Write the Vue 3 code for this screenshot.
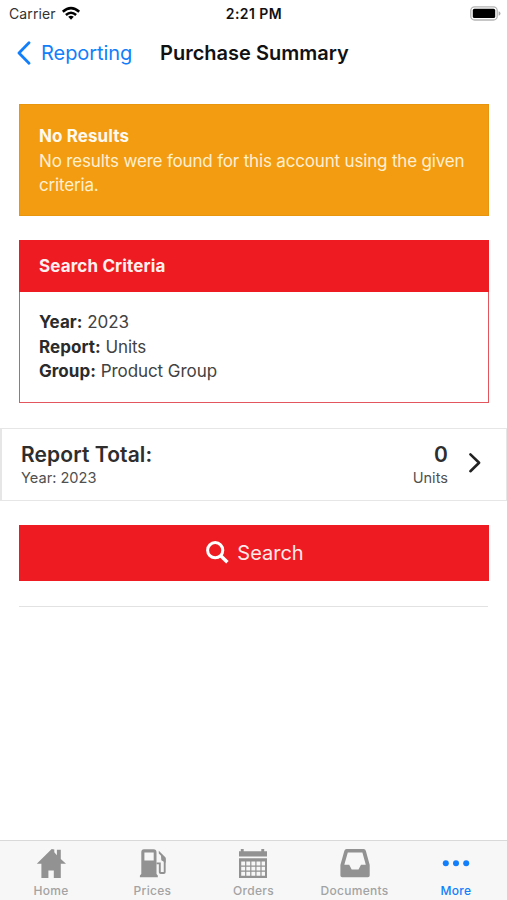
<script setup>
const criteria = [
  { label: 'Year:', value: '2023' },
  { label: 'Report:', value: 'Units' },
  { label: 'Group:', value: 'Product Group' },
]
const tabs = ['Home', 'Prices', 'Orders', 'Documents', 'More']
</script>

<template>
  <div class="screen">
    <header class="status">
      <div class="carrier">
        <span>Carrier</span>
        <svg width="20" height="15" viewBox="0 0 20 15" fill="none" stroke="#000" stroke-width="2.5">
          <path d="M1.8 5.8Q10-1.6 18.2 5.8" />
          <path d="M4.9 9Q10 4.5 15.1 9" />
          <path d="M7.2 10.8Q10 8.6 12.8 10.8L10 13.7Z" fill="#000" stroke="none" />
        </svg>
      </div>
      <div class="time">2:21 PM</div>
      <svg class="battery" width="31" height="15" viewBox="0 0 31 15">
        <rect x=".8" y=".8" width="26.4" height="13.2" rx="3.8" fill="#fff" stroke="#b4b4b4" stroke-width="1.3" />
        <rect x="2.8" y="2.8" width="22.4" height="9.2" rx="1.6" />
        <path d="M28.6 5.2Q30.5 5.8 30.5 7.5T28.6 9.8Z" fill="#aaa" />
      </svg>
    </header>

    <nav class="nav">
      <a class="back">
        <svg width="14" height="24" viewBox="0 0 14 24" fill="none" stroke="#117efb" stroke-width="2.8" stroke-linecap="round" stroke-linejoin="round">
          <path d="M12 1.8 2 12l10 10.2" />
        </svg>
        <span>Reporting</span>
      </a>
      <h1>Purchase Summary</h1>
    </nav>

    <main>
      <section class="alert">
        <strong>No Results</strong>
        <p>No results were found for this account using the given criteria.</p>
      </section>

      <section class="card">
        <h2>Search Criteria</h2>
        <div class="card-body">
          <div v-for="c in criteria" :key="c.label"><b>{{ c.label }}</b> {{ c.value }}</div>
        </div>
      </section>

      <section class="total">
        <div class="total-left">
          <div class="big">Report Total:</div>
          <div class="small">Year: 2023</div>
        </div>
        <div class="total-right">
          <div class="big">0</div>
          <div class="small">Units</div>
        </div>
        <svg class="chevron" width="14" height="22" viewBox="0 0 14 22" fill="none" stroke="#222" stroke-width="2.6" stroke-linecap="round" stroke-linejoin="round">
          <path d="m2.4 2.4 8.7 8.4-8.7 8.4" />
        </svg>
      </section>

      <button class="search">
        <svg width="23" height="23" viewBox="0 0 23 23" fill="none" stroke="#fff" stroke-width="3">
          <circle cx="9.2" cy="9.2" r="7.6" />
          <path d="m14.7 14.7 6.7 6.6" stroke-width="3.5" />
        </svg>
        <span>Search</span>
      </button>
      <hr />
    </main>

    <footer class="tabs">
      <div v-for="t in tabs" :key="t" class="tab" :class="{ active: t === 'More' }">
        <svg v-if="t === 'Home'" width="30" height="30" viewBox="0 0 30 30" fill="currentColor">
          <path d="M15.7 0 .8 14.8h4.6V29h7v-7.5h5.4V29h7V14.8h5.2L24.8 10V.8h-3.9v5.4L18.3 3.2V.5Z" />
        </svg>
        <svg v-else-if="t === 'Prices'" width="30" height="30" viewBox="0 0 30 30" fill="currentColor">
          <path fill-rule="evenodd" d="M6 .2h9.5q3 0 3 3V25l1.3 1.6v1.7H1.9v-1.7L3.3 25V3.2q0-3 2.7-3Zm.4 3.2v8.2h9.3V3.4Z" />
          <path fill="none" stroke="currentColor" stroke-width="1.9" d="M18.5 14.4h3.3v8.8q0 .8.8.8h3.2q.9 0 .9-.8V9.3" />
          <path d="M20.8 1.8 27.6 8.6v5.2l-4.3-2.6-.3-4.4-2.2-2.3Z" />
        </svg>
        <svg v-else-if="t === 'Orders'" width="30" height="30" viewBox="1 0 30 30" fill="currentColor">
          <path d="M1 2.3h1.8V0h2.9v2.3h17.6V0h2.9v2.3H29v5.3H1Z" />
          <path fill-rule="evenodd" d="M1 9.3h28V29H1ZM3.2 12.5v4h3.9v-4Zm5.1 0v4h3.9v-4Zm5.1 0v4h3.9v-4Zm5.1 0v4h3.9v-4Zm5.1 0v4h3.4v-4ZM3.2 17.7v3.9h3.9v-3.9Zm5.1 0v3.9h3.9v-3.9Zm5.1 0v3.9h3.9v-3.9Zm5.1 0v3.9h3.9v-3.9Zm5.1 0v3.9h3.4v-3.9ZM3.2 22.8v3.9h3.9v-3.9Zm5.1 0v3.9h3.9v-3.9Zm5.1 0v3.9h3.9v-3.9Zm5.1 0v3.9h3.9v-3.9Zm5.1 0v3.9h3.4v-3.9Z" />
        </svg>
        <svg v-else-if="t === 'Documents'" width="30" height="30" viewBox="0 0 30 30" fill="currentColor">
          <path fill-rule="evenodd" d="M6.6 0h17q1.8 0 2.3 2L29.7 16v10.5q0 1.8-1.8 1.8H2.2q-1.8 0-1.8-1.8V16L4.3 2q.5-2 2.3-2Zm1.2 3.6L4.3 15.7h4.9l2.5 4.9h6.8l2.5-4.9h4.8L22.4 3.6Z" />
        </svg>
        <svg v-else width="30" height="30" viewBox="0 0 30 30" fill="currentColor">
          <circle cx="4.8" cy="14.2" r="3" /><circle cx="15" cy="14.2" r="3" /><circle cx="25.2" cy="14.2" r="3" />
        </svg>
        <span>{{ t }}</span>
      </div>
    </footer>
  </div>
</template>

<style>
body { margin: 0; background: #fff; }
</style>

<style scoped>
* { box-sizing: border-box; }
.screen { width: 507px; height: 900px; display: flex; flex-direction: column; font-family: Inter, "Liberation Sans", sans-serif; color: #2e2e2e; background: #fff; overflow: hidden; }
.status { height: 27px; display: grid; grid-template-columns: 1fr auto 1fr; align-items: center; padding: 0 6px 0 9px; color: #111; font-size: 14px; }
.carrier { display: flex; align-items: center; gap: 5px; color: #333; letter-spacing: .1px; }
.time { font-weight: 600; letter-spacing: .45px; margin-left: -2px; }
.battery { justify-self: end; }
.nav { height: 51px; display: flex; align-items: center; padding-left: 17px; }
.back { display: flex; align-items: center; gap: 10px; width: 143px; color: #117efb; font-size: 20px; white-space: nowrap; }
.back span { letter-spacing: -.05px; }
h1 { margin: 0; font-size: 20px; font-weight: 600; color: #111; white-space: nowrap; }
main { flex: 1; padding-top: 26px; display: flex; flex-direction: column; }
.alert { height: 112px; margin: 0 18px 0 19px; padding: 19px 19px 0; border: 1px solid #e9960f; background: #f39c12; color: #fff0d0; font-size: 17px; line-height: 24.5px; }
.alert strong { display: block; color: #fffaf0; font-weight: 700; letter-spacing: .1px; }
.alert p { margin: 0; letter-spacing: -.17px; }
.card { height: 163px; margin: 24px 18px 0 19px; border: 1px solid #e4565d; font-size: 17px; }
h2 { margin: -1px -1px 0; height: 52px; line-height: 53px; padding-left: 20px; background: #ee1c22; color: #fff0f0; font-size: 17px; font-weight: 700; letter-spacing: .14px; }
.card-body { padding: 18px 19px 0; line-height: 24.5px; color: #424242; letter-spacing: -.06px; }
.card-body b { color: #2b2b2b; font-weight: 700; letter-spacing: .04px; }
.total { height: 73px; margin-top: 25px; padding: 0 24px 0 19px; display: flex; align-items: center; border: 1px solid #e6e6e6; border-left-width: 2px; }
.total-left { flex: 1; }
.total-right { text-align: right; margin-right: 20px; }
.chevron { margin-bottom: 4px; }
.big { font-size: 21px; line-height: 27px; font-weight: 600; letter-spacing: .1px; }
.small { font-size: 14.6px; line-height: 20px; color: #505050; }
.search { height: 56px; margin: 24px 18px 0 19px; display: flex; justify-content: center; align-items: center; gap: 8px; border: 0; padding: 0 0 0 2px; background: #ee1c22; color: #ffe9e9; font-family: inherit; font-size: 20px; }
.search svg { margin-bottom: 2px; }
hr { width: 469px; margin: 25px 0 0 19px; border: 0; border-top: 1px solid #e2e2e2; }
.tabs { height: 60px; display: grid; grid-template-columns: 102px 101px 101px 101px 102px; border-top: 1px solid #d9d9d9; background: #f7f7f7; }
.tab { display: flex; flex-direction: column; align-items: center; padding-top: 8px; color: #929292; font-size: 12px; font-weight: 500; line-height: 16px; }
.tab span { margin-top: 4px; color: #a3a3a3; letter-spacing: .3px; }
.tab.active, .tab.active span { color: #117efb; }
</style>
